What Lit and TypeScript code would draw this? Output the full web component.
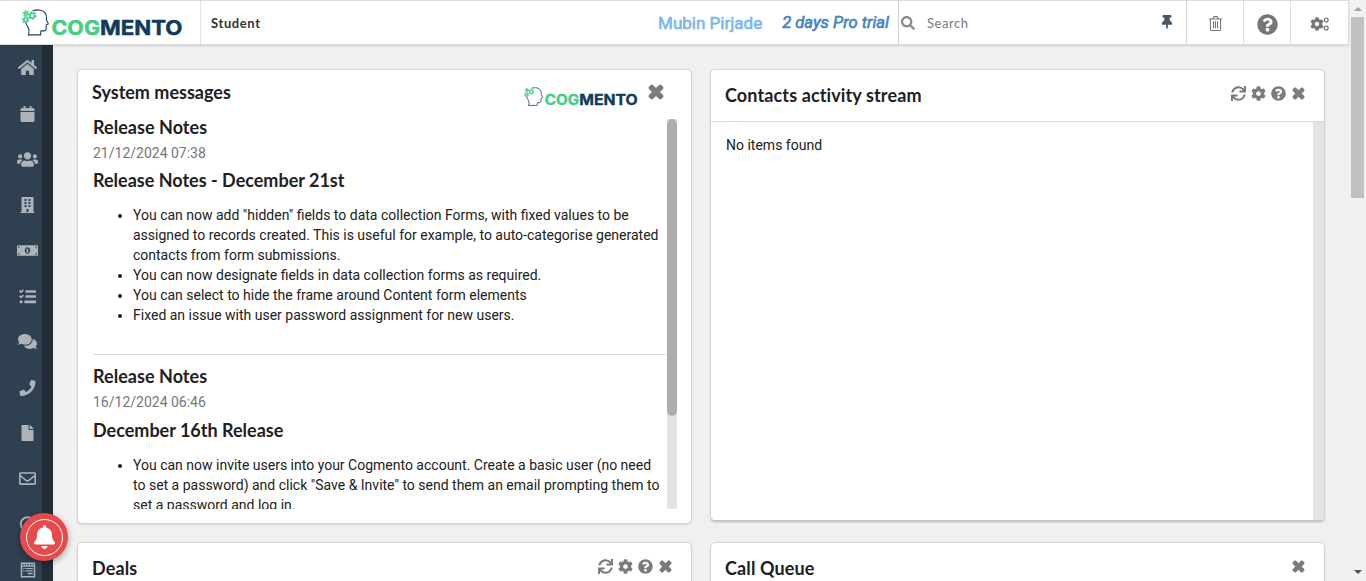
import { LitElement, html, svg, css } from "lit";
import { customElement, property } from "lit/decorators.js";

const shapes: Record<string, [string, string]> = {
  home: ["0 0 576 512", "M280.37 148.26L96 300.11V464a16 16 0 0 0 16 16l112.06-.29a16 16 0 0 0 15.92-16V368a16 16 0 0 1 16-16h64a16 16 0 0 1 16 16v95.64a16 16 0 0 0 16 16.05L464 480a16 16 0 0 0 16-16V300L295.67 148.26a12.19 12.19 0 0 0-15.3 0zM571.6 251.47L488 182.56V44.05a12 12 0 0 0-12-12h-56a12 12 0 0 0-12 12v72.61L318.47 43a48 48 0 0 0-61 0L4.34 251.47a12 12 0 0 0-1.6 16.9l25.5 31A12 12 0 0 0 45.15 301l235.22-193.74a12.19 12.19 0 0 1 15.3 0L530.9 301a12 12 0 0 0 16.9-1.6l25.5-31a12 12 0 0 0-1.7-16.93z"],
  calendar: ["0 0 448 512", "M12 192h424c6.6 0 12 5.4 12 12v260c0 26.5-21.5 48-48 48H48c-26.5 0-48-21.5-48-48V204c0-6.6 5.4-12 12-12zm436-44v-36c0-26.5-21.5-48-48-48h-48V12c0-6.6-5.4-12-12-12h-40c-6.6 0-12 5.4-12 12v52H160V12c0-6.6-5.4-12-12-12h-40c-6.6 0-12 5.4-12 12v52H48C21.5 64 0 85.5 0 112v36c0 6.6 5.4 12 12 12h424c6.6 0 12-5.4 12-12z"],
  users: ["0 0 640 512", "M96 224c35.3 0 64-28.7 64-64s-28.7-64-64-64-64 28.7-64 64 28.7 64 64 64zm448 0c35.3 0 64-28.7 64-64s-28.7-64-64-64-64 28.7-64 64 28.7 64 64 64zm32 32h-64c-17.6 0-33.5 7.1-45.1 18.6 40.3 22.1 68.9 62 75.1 109.4h66c17.7 0 32-14.3 32-32v-32c0-35.3-28.7-64-64-64zm-256 0c61.9 0 112-50.1 112-112S381.9 32 320 32 208 82.1 208 144s50.1 112 112 112zm76.8 32h-8.3c-20.8 10-43.9 16-68.5 16s-47.6-6-68.5-16h-8.3C179.6 288 128 339.6 128 403.2V432c0 26.5 21.5 48 48 48h288c26.5 0 48-21.5 48-48v-28.8c0-63.6-51.6-115.2-115.2-115.2zm-223.7-13.4C161.5 263.1 145.6 256 128 256H64c-35.3 0-64 28.7-64 64v32c0 17.7 14.3 32 32 32h65.9c6.3-47.4 34.9-87.3 75.2-109.4z"],
  building: ["0 0 448 512", "M436 480h-20V24c0-13.3-10.7-24-24-24H56C42.7 0 32 10.7 32 24v456H12c-6.6 0-12 5.4-12 12v20h448v-20c0-6.6-5.4-12-12-12zM128 64h64v64h-64zM256 64h64v64h-64zM128 160h64v64h-64zM256 160h64v64h-64zM128 256h64v64h-64zM256 256h64v64h-64zM192 384h64v96h-64z"],
  money: ["0 0 640 512", "M608 96H32C14 96 0 110 0 128v256c0 18 14 32 32 32h576c18 0 32-14 32-32V128c0-18-14-32-32-32zM40 136h56l-56 56zM40 376v-56l56 56zM320 352c-48 0-84-43-84-96s36-96 84-96 84 43 84 96-36 96-84 96zM600 376h-56l56-56zM600 192l-56-56h56zM298 200h40v88h18v32h-72v-32h18v-48h-18v-25z"],
  tasks: ["0 0 512 512", "M139 62l-15-15c-5-5-13-5-18 0L62 91 39 69c-5-5-12-5-17 0L5 86c-5 5-5 13 0 18l47 47c5 5 13 5 18 0l69-71c5-5 5-13 0-18zM139 222l-15-15c-5-5-13-5-18 0l-44 44-23-22c-5-5-12-5-17 0L5 246c-5 5-5 13 0 18l47 47c5 5 13 5 18 0l69-71c5-5 5-13 0-18zM64 368a48 48 0 1 0 0 96 48 48 0 0 0 0-96zM208 64h288a16 16 0 0 1 16 16v48a16 16 0 0 1-16 16H208a16 16 0 0 1-16-16V80a16 16 0 0 1 16-16zM208 216h288a16 16 0 0 1 16 16v48a16 16 0 0 1-16 16H208a16 16 0 0 1-16-16v-48a16 16 0 0 1 16-16zM176 376h320a16 16 0 0 1 16 16v48a16 16 0 0 1-16 16H176a16 16 0 0 1-16-16v-48a16 16 0 0 1 16-16z"],
  comments: ["0 0 576 512", "M416 192c0-88.4-93.1-160-208-160S0 103.6 0 192c0 34.3 14.1 65.9 38 92-13.4 30.2-35.5 54.2-35.8 54.5-2.2 2.3-2.8 5.7-1.5 8.7S4.8 352 8 352c36.6 0 66.9-12.3 88.7-25 32.2 15.7 70.3 25 111.3 25 114.9 0 208-71.6 208-160zm122 220c23.9-26 38-57.7 38-92 0-66.9-53.5-124.2-129.3-148.1.9 6.6 1.3 13.3 1.3 20.1 0 105.9-107.7 192-240 192-10.8 0-21.3-.8-31.7-1.9C207.8 439.6 281.8 480 368 480c41 0 79.1-9.2 111.3-25 21.8 12.7 52.1 25 88.7 25 3.2 0 6.1-1.9 7.3-4.8 1.3-2.9.7-6.3-1.5-8.7-.3-.3-22.4-24.2-35.8-54.5z"],
  phone: ["0 0 512 512", "M493.4 24.6l-104-24c-11.3-2.6-22.9 3.3-27.5 13.9l-48 112c-4.2 9.8-1.4 21.3 6.9 28l60.6 49.6c-36 76.7-98.9 140.5-177.2 177.2l-49.6-60.6c-6.8-8.3-18.2-11.1-28-6.9l-112 48C3.9 366.5-2 378.1.6 389.4l24 104C27.1 504.2 36.7 512 48 512c256.1 0 464-207.5 464-464 0-11.2-7.7-20.9-18.6-23.4z"],
  file: ["0 0 384 512", "M224 136V0H24C10.7 0 0 10.7 0 24v464c0 13.3 10.7 24 24 24h336c13.3 0 24-10.7 24-24V160H248c-13.2 0-24-10.8-24-24zm160-14.1v6.1H256V0h6.1c6.4 0 12.5 2.5 17 7l97.9 98c4.5 4.5 7 10.6 7 16.9z"],
  mail: ["0 0 512 512", "M464 64H48C21.49 64 0 85.49 0 112v288c0 26.51 21.49 48 48 48h416c26.51 0 48-21.49 48-48V112c0-26.51-21.49-48-48-48zm0 48v40.805c-22.422 18.259-58.168 46.651-134.587 106.49-16.841 13.247-50.201 45.072-73.413 44.701-23.208.375-56.579-31.459-73.413-44.701C106.18 199.465 70.425 171.067 48 152.805V112h416zM48 400V214.398c22.914 18.251 55.409 43.862 104.938 82.646 21.857 17.205 60.134 55.186 103.062 54.955 42.717.231 80.509-37.199 103.053-54.947 49.528-38.783 82.032-64.401 104.947-82.653V400H48z"],
  ring: ["0 0 512 512", "M256 8a248 248 0 1 0 0 496 248 248 0 0 0 0-496zM256 72a184 184 0 1 1 0 368 184 184 0 0 1 0-368z"],
  form: ["0 0 512 512", "M24 16h464v480H24zM72 64h42v44H72zM156 64h42v44h-42zM240 64h42v44h-42zM324 64h42v44h-42zM408 64h32v44h-32zM72 150v298h368V150zM104 188h40v36h-40zM176 188h232v36H176zM104 264h40v36h-40zM176 264h232v36H176zM248 346h160v42H248z"],
  search: ["0 0 512 512", "M505 442.7L405.3 343c-4.5-4.5-10.6-7-17-7H372c27.6-35.3 44-79.7 44-128C416 93.1 322.9 0 208 0S0 93.1 0 208s93.1 208 208 208c48.3 0 92.7-16.4 128-44v16.3c0 6.4 2.5 12.5 7 17l99.7 99.7c9.4 9.4 24.6 9.4 33.9 0l28.3-28.3c9.4-9.4 9.4-24.6.1-34zM208 336c-70.7 0-128-57.2-128-128 0-70.7 57.2-128 128-128 70.7 0 128 57.2 128 128 0 70.7-57.2 128-128 128z"],
  pin: ["0 0 384 512", "M298.028 214.267L285.793 96H328c13.255 0 24-10.745 24-24V24c0-13.255-10.745-24-24-24H56C42.745 0 32 10.745 32 24v48c0 13.255 10.745 24 24 24h42.207L85.972 214.267C37.465 236.82 0 277.261 0 328c0 13.255 10.745 24 24 24h136v104.007c0 1.242.289 2.467.845 3.578l24 48c2.941 5.882 11.364 5.893 14.311 0l24-48a8.008 8.008 0 0 0 .845-3.578V352h136c13.255 0 24-10.745 24-24-.001-51.183-37.983-91.42-85.973-113.733z"],
  trash: ["0 0 448 512", "M0 80h120l24-54C151 10 162 0 180 0h88c18 0 29 10 36 26l24 54h120v36h-32v348c0 27-21 48-48 48H80c-27 0-48-21-48-48V116H0zM160 80h128l-16-42h-96zM68 116v344c0 10 6 16 16 16h280c10 0 16-6 16-16V116zM138 176h36v240h-36zM206 176h36v240h-36zM274 176h36v240h-36z"],
  help: ["0 0 512 512", "M504 256c0 136.997-111.043 248-248 248S8 392.997 8 256C8 119.083 119.043 8 256 8s248 111.083 248 248zM262.655 90c-54.497 0-89.255 22.957-116.549 63.758-3.536 5.286-2.353 12.415 2.715 16.258l34.699 26.31c5.205 3.947 12.621 3.008 16.665-2.122 17.864-22.658 30.113-35.797 57.303-35.797 20.429 0 45.698 13.148 45.698 32.958 0 14.976-12.363 22.667-32.534 33.976C247.128 238.528 216 254.941 216 296v4c0 6.627 5.373 12 12 12h56c6.627 0 12-5.373 12-12v-1.333c0-28.462 83.186-29.647 83.186-106.667 0-58.002-60.165-102-116.531-102zM256 338c-25.365 0-46 20.635-46 46 0 25.364 20.635 46 46 46s46-20.636 46-46c0-25.365-20.635-46-46-46z"],
  cog: ["0 0 512 512", "M487.4 315.7l-42.6-24.6c4.3-23.2 4.3-47 0-70.2l42.6-24.6c4.9-2.8 7.1-8.6 5.5-14-11.1-35.6-30-67.8-54.7-94.6-3.8-4.1-10-5.1-14.8-2.3L380.8 110c-17.9-15.4-38.5-27.3-60.8-35.1V25.8c0-5.6-3.9-10.5-9.4-11.7-36.7-8.2-74.3-7.8-109.2 0-5.5 1.2-9.4 6.1-9.4 11.7V75c-22.2 7.9-42.8 19.8-60.8 35.1L88.7 85.5c-4.9-2.8-11-1.9-14.8 2.3-24.7 26.7-43.6 58.9-54.7 94.6-1.7 5.4.6 11.2 5.5 14L67.3 221c-4.3 23.2-4.3 47 0 70.2l-42.6 24.6c-4.9 2.8-7.1 8.6-5.5 14 11.1 35.6 30 67.8 54.7 94.6 3.8 4.1 10 5.1 14.8 2.3l42.6-24.6c17.9 15.4 38.5 27.3 60.8 35.1v49.2c0 5.6 3.9 10.5 9.4 11.7 36.7 8.2 74.3 7.8 109.2 0 5.5-1.2 9.4-6.1 9.4-11.7v-49.2c22.2-7.9 42.8-19.8 60.8-35.1l42.6 24.6c4.9 2.8 11 1.9 14.8-2.3 24.7-26.7 43.6-58.9 54.7-94.6 1.5-5.5-.7-11.3-5.6-14.1zM256 336c-44.1 0-80-35.9-80-80s35.9-80 80-80 80 35.9 80 80-35.9 80-80 80z"],
  refresh: ["0 0 512 512", "M440.65 12.57l4 82.77A247.16 247.16 0 0 0 255.83 8C134.73 8 33.91 94.92 12.29 209.82A12 12 0 0 0 24.09 224h49.05a12 12 0 0 0 11.67-9.26 175.91 175.91 0 0 1 317-56.94l-101.46-4.86a12 12 0 0 0-12.57 12v47.41a12 12 0 0 0 12 12H500a12 12 0 0 0 12-12V12a12 12 0 0 0-12-12h-47.37a12 12 0 0 0-11.98 12.57zM255.83 432a175.61 175.61 0 0 1-146-77.8l101.8 4.87a12 12 0 0 0 12.57-12v-47.4a12 12 0 0 0-12-12H12a12 12 0 0 0-12 12V500a12 12 0 0 0 12 12h47.35a12 12 0 0 0 12-12.6l-4.15-82.57A247.17 247.17 0 0 0 255.83 504c121.11 0 221.93-86.92 243.55-201.82a12 12 0 0 0-11.8-14.18h-49.05a12 12 0 0 0-11.67 9.26A175.86 175.86 0 0 1 255.83 432z"],
  close: ["0 0 12 12", "M2.3.5h1.2L6 3 8.500.5h1.200L11.500 2.300v1.200L9 6l2.500 2.500v1.200L9.700 11.500H8.500L6 9l-2.500 2.500H2.300L.5 9.700V8.500L3 6 .5 3.500V2.300z"],
  bell: ["0 0 448 512", "M224 512c35.32 0 63.97-28.65 63.97-64H160.03c0 35.35 28.65 64 63.97 64zm215.39-149.71c-19.32-20.76-55.47-51.99-55.47-154.29 0-77.7-54.48-139.9-127.94-155.16V32c0-17.67-14.32-32-31.98-32s-31.98 14.33-31.98 32v20.84C118.56 68.1 64.08 130.3 64.08 208c0 102.3-36.15 133.53-55.47 154.29-6 6.45-8.66 14.16-8.61 21.71.11 16.4 12.98 32 32.1 32h383.8c19.12 0 32-15.6 32.1-32 .05-7.55-2.61-15.27-8.61-21.71z"],
};

const icon = (name: string, cls = "") => html`<svg class="icon ${cls}" viewBox=${shapes[name][0]} aria-hidden="true"><path fill="currentColor" fill-rule="evenodd" d=${shapes[name][1]}></path></svg>`;

const gear = (cx: number, cy: number, r: number) => svg`
  <circle cx=${cx} cy=${cy} r=${r} fill="none" stroke="#45ce85" stroke-width="1.7"></circle>
  <circle cx=${cx} cy=${cy} r=${r + 1.3} fill="none" stroke="#45ce85" stroke-width="1.3" pathLength="12" stroke-dasharray="1 1"></circle>`;

@customElement("cog-logo")
export class CogLogo extends LitElement {
  static styles = css`
    :host { display: block; }
    svg { display: block; width: 100%; height: 100%; overflow: visible; }
    text { font: 700 20.500px "Inter", sans-serif; stroke-width: .5px; }
    .cog { stroke: #45ce85; }
    .mento { stroke: #113a5b; }
  `;
  render() {
    return html`<svg viewBox="0 0 161 28">
      <path d="M10.500 1.800C13 .9 16 .6 18.500 1.200c4.200 1 6.300 4.500 6 8.300l-.1 1.500 1.700 3.300c.3.6 0 1-.6 1.200l-1.200.3-.2 4c-.1 1.400-.8 2.100-2.100 2.100h-3l-.4 4H6.300c1.300-3.300.9-6-.8-8.500C4.500 16 3.900 14.500 3.700 13" fill="none" stroke="#1c4260" stroke-width="1.100"></path>
      ${gear(10.300, 6.600, 2.400)}${gear(4, 4.400, 1.400)}${gear(3.600, 10.800, 1.800)}
      <text class="cog" x="29.500" y="25.800" fill="#45ce85" textLength="48.500" lengthAdjust="spacingAndGlyphs">COG</text>
      <text class="mento" x="78" y="25.800" fill="#113a5b" textLength="82.500" lengthAdjust="spacingAndGlyphs">MENTO</text>
    </svg>`;
  }
}

const iconCss = css`
  .icon { display: block; flex: none; width: 16px; height: 16px; }
`;

@customElement("dash-card")
export class DashCard extends LitElement {
  @property() heading = "";
  @property({ type: Array }) tools: string[] = [];
  static styles = [iconCss, css`
    :host {
      display: flex; flex-direction: column; box-sizing: border-box; background: #fff;
      border: 1px solid #d4d4d5; border-radius: 5px; box-shadow: 0 1px 2px rgba(34, 36, 38, .12); overflow: hidden;
    }
    .head { display: flex; flex: none; justify-content: space-between; height: 51px; padding: 0 18px 0 14px; }
    h2 { margin: 0; padding-top: 11px; font: 700 18px/28px "Lato", sans-serif; letter-spacing: .12px; color: #1f2021; }
    .tools { display: flex; gap: 5px; height: 15px; padding-top: 16px; color: #7b7b7b; }
    .tools .icon { width: 15px; height: 15px; }
    .tools .close { width: 13px; height: 13px; margin: 1px; }
  `];
  render() {
    return html`
      <div class="head">
        <h2>${this.heading}</h2>
        <div class="tools">${this.tools.map((t) => icon(t, t))}</div>
      </div>
      <slot></slot>`;
  }
}

const notes = [
  {
    date: "21/12/2024 07:38",
    title: "Release Notes - December 21st",
    items: [
      ['You can now add "hidden" fields to data collection Forms, with fixed values to be', "assigned to records created. This is useful for example, to auto-categorise generated", "contacts from form submissions."],
      ["You can now designate fields in data collection forms as required."],
      ["You can select to hide the frame around Content form elements"],
      ["Fixed an issue with user password assignment for new users."],
    ],
  },
  {
    date: "16/12/2024 06:46",
    title: "December 16th Release",
    items: [
      ["You can now invite users into your Cogmento account. Create a basic user (no need", 'to set a password) and click "Save & Invite" to send them an email prompting them to', "set a password and log in."],
    ],
  },
];

const nav = ["home", "calendar", "users", "building", "money", "tasks", "comments", "phone", "file", "mail", "ring", "form"];

@customElement("app-root")
export class AppRoot extends LitElement {
  static styles = [iconCss, css`
    :host {
      display: grid; grid-template: 45px 1fr / 1fr 17px; width: 1366px; height: 581px; overflow: hidden;
      position: relative; background: #f0f0f0; font-family: "Roboto", sans-serif; color: #212121;
    }
    .topbar {
      display: flex; box-sizing: border-box; width: 1349px; height: 45px; background: #fff; z-index: 2;
      border: 1px solid #dcdcdc; border-width: 1px 1px 1px 0; box-shadow: 0 1px 2px rgba(34, 36, 38, .15);
    }
    .brand { box-sizing: border-box; width: 201px; padding: 8px 0 0 22px; border-right: 1px solid #e4e4e4; }
    .brand cog-logo { width: 161px; height: 28px; }
    .account { flex: 1; padding-left: 10px; font: 700 13px/45px "Lato", sans-serif; letter-spacing: .6px; color: #333; }
    .user { padding-right: 20px; font-size: 17px; line-height: 45px; color: #7cb5ec; -webkit-text-stroke: .6px #7cb5ec; }
    .trial { padding-right: 9px; font-size: 16.600px; line-height: 44px; font-style: italic; color: #4183c4; -webkit-text-stroke: .6px #4183c4; }
    .search { box-sizing: border-box; display: flex; width: 289px; padding: 15px 13px 0 1px; border-left: 1px solid #d0d0d0; border-right: 1px solid #d8d8d8; }
    .search .icon { width: 14px; height: 14px; margin-left: 1px; color: #8a8a8a; }
    .search .label { flex: 1; padding-left: 12px; font: 400 13px/15px "Lato", sans-serif; letter-spacing: .55px; color: #777; }
    .search .pin { width: 12px; height: 14px; margin-top: -1px; color: #4a5866; }
    .cell { display: flex; box-sizing: border-box; align-items: center; justify-content: center; border-right: 1px solid #dedede; color: #767676; padding-top: 2px; }
    .bin { width: 57px; } .ask { width: 47px; padding-top: 3px; } .setup { width: 57px; border-right: 0; }
    .bin .icon { width: 13px; height: 15px; }
    .ask .icon { width: 21px; height: 21px; }
    .setup .icon { width: 14px; height: 14px; }
    .mini { width: 6px; height: 14px; margin-left: -1px; }
    .body { display: flex; height: 536px; min-height: 0; overflow: hidden; }
    .side { flex: none; box-sizing: border-box; width: 53px; background: #2f4050; border-right: 11px solid #222d38; padding: .1px 0 0 14px; }
    .side .row { display: flex; align-items: center; justify-content: center; width: 27.600px; height: 45.660px; color: #acb3b9; }
    .side .icon { width: 21px; height: 16px; }
    .side .home, .side .comments { width: 19px; height: 17px; }
    .side .users { height: 17px; }
    .side .money { width: 21px; height: 17px; }
    .side .tasks, .side .mail { width: 17px; height: 17px; }
    .side .form { width: 16px; }
    .board { flex: none; display: grid; grid-template: 455px 200px / 615px 615px; gap: 18px; padding: 24px; align-items: start; }
    .stream { height: 453px; border-bottom-width: 2px; border-bottom-color: #c6c6c7; }
    .card {
      display: flex; flex-direction: column; box-sizing: border-box; height: 455px; background: #fff;
      border: 1px solid #d4d4d5; border-radius: 5px; box-shadow: 0 1px 2px rgba(34, 36, 38, .12);
    }
    .card .head { display: flex; height: 49px; flex: none; padding: 0 27px 0 14px; }
    h2, h3 { font: 700 18px/28px "Lato", sans-serif; color: #1f2021; }
    .card h2 { flex: 1; margin: 0; padding-top: 8px; }
    .card cog-logo { width: 114px; height: 20px; margin: 17px 10px 0 0; }
    .head .close { width: 16px; height: 16px; margin-top: 14px; color: #7b7b7b; }
    .feed { display: flex; justify-content: space-between; height: 390px; padding: 0 14px 0 15px; }
    .list { width: 573px; height: 390px; overflow: hidden; }
    .note { box-sizing: border-box; height: 236px; border-bottom: 1px solid #dcdcdc; }
    .note + .note { height: auto; padding-top: 13px; border-bottom: 0; }
    h3 { margin: 0; height: 26px; line-height: 16px; letter-spacing: .04px; }
    .date { height: 27px; font-size: 14px; line-height: 16px; color: #767676; }
    .note + .note .date { height: 28px; }
    h3.title { height: 33px; letter-spacing: 0; }
    ul { margin: 0; padding: 0 0 0 40px; font-size: 14px; line-height: 20px; color: #212121; }
    li span { display: block; white-space: nowrap; }
    .track { width: 10px; height: 390px; background: #e4e4e4; }
    .thumb { width: 10px; height: 297px; border-radius: 5px; background: #adadad; }
    .empty { display: flex; flex: 1; justify-content: space-between; border-top: 1px solid #d9d9da; }
    .empty p { margin: 0; padding: 13px 15px; font-size: 14px; line-height: 20px; }
    .gutter { width: 11px; background: #e3e3e3; }
    .scroll { grid-column: 2; grid-row: 1 / 3; display: flex; flex-direction: column; align-items: center; background: #f1f1f1; }
    .up, .down { width: 0; height: 0; border: 4px solid transparent; border-top: 0; border-bottom: 4px solid #a0a0a0; margin-top: 7px; }
    .bar { width: 13px; height: 181px; margin-top: 6px; background: #c1c1c1; }
    .down { border-top: 4px solid #505050; border-bottom: 0; margin: auto 0 7px; }
    .alert {
      position: absolute; left: 20px; top: 513px; width: 48px; height: 48px; z-index: 3; border-radius: 50%;
      display: flex; align-items: center; justify-content: center; background: #e54b4d; color: #fff; box-shadow: 0 2px 6px rgba(0, 0, 0, .35);
    }
    .alert .disc { display: flex; align-items: center; justify-content: center; width: 35px; height: 35px; border: 1.500px solid #fff; border-radius: 50%; }
    .alert .icon { width: 25px; height: 24px; }
  `];

  render() {
    return html`
      <header class="topbar">
        <div class="brand"><cog-logo></cog-logo></div>
        <div class="account">Student</div>
        <div class="user">Mubin Pirjade</div>
        <div class="trial">2 days Pro trial</div>
        <div class="search">${icon("search")}<span class="label">Search</span>${icon("pin", "pin")}</div>
        <div class="cell bin">${icon("trash")}</div>
        <div class="cell ask">${icon("help")}</div>
        <div class="cell setup">${icon("cog")}
          <svg class="mini" viewBox="0 0 6 14"><g fill="none" stroke="currentColor" stroke-width="1.300"><circle cx="3.200" cy="3" r="1.900"></circle><circle cx="3.200" cy="11" r="1.900"></circle></g></svg>
        </div>
      </header>
      <div class="body">
        <nav class="side">${nav.map((n) => html`<div class="row">${icon(n, n)}</div>`)}</nav>
        <main class="board">
          <section class="card">
            <div class="head"><h2>System messages</h2><cog-logo></cog-logo>${icon("close", "close")}</div>
            <div class="feed">
              <div class="list">
                ${notes.map((n) => html`<article class="note">
                  <h3>Release Notes</h3>
                  <div class="date">${n.date}</div>
                  <h3 class="title">${n.title}</h3>
                  <ul>${n.items.map((lines) => html`<li>${lines.map((l) => html`<span>${l}</span>`)}</li>`)}</ul>
                </article>`)}
              </div>
              <div class="track"><div class="thumb"></div></div>
            </div>
          </section>
          <dash-card class="stream" heading="Contacts activity stream" .tools=${["refresh", "cog", "help", "close"]}>
            <div class="empty"><p>No items found</p><div class="gutter"></div></div>
          </dash-card>
          <dash-card heading="Deals" .tools=${["refresh", "cog", "help", "close"]}></dash-card>
          <dash-card heading="Call Queue" .tools=${["close"]}></dash-card>
        </main>
      </div>
      <div class="scroll"><div class="up"></div><div class="bar"></div><div class="down"></div></div>
      <div class="alert"><div class="disc">${icon("bell")}</div></div>`;
  }
}
